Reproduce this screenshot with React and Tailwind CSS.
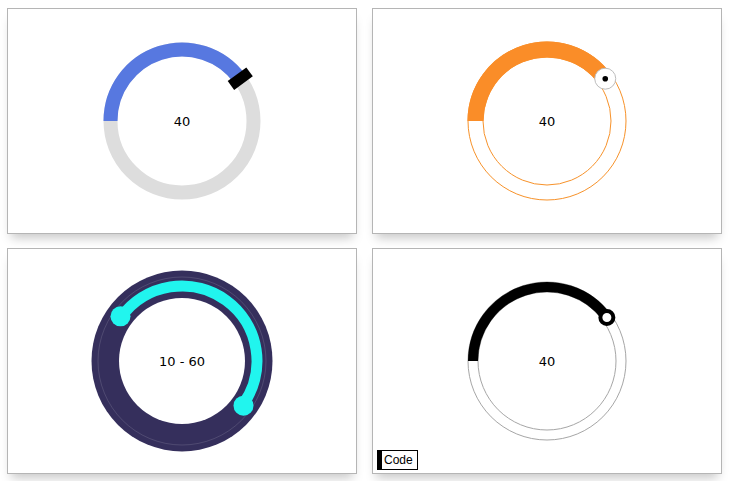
const CX = 100;
const CY = 100;

function pt(f, r) {
  const a = 2 * Math.PI * f;
  return [CX - r * Math.cos(a), CY - r * Math.sin(a)];
}

function arc(f0, f1, r) {
  const [x0, y0] = pt(f0, r);
  const [x1, y1] = pt(f1, r);
  const large = f1 - f0 > 0.5 ? 1 : 0;
  return `M ${x0} ${y0} A ${r} ${r} 0 ${large} 1 ${x1} ${y1}`;
}

function Label({ children }) {
  return (
    <div className="absolute inset-0 flex items-center justify-center pt-[2px] text-[13px] text-black font-['DejaVu_Sans',sans-serif]">
      {children}
    </div>
  );
}

function Panel({ children }) {
  return (
    <div className="relative flex h-[226px] w-[350px] items-center justify-center border border-[#b5b5b5] bg-white shadow-[0_8px_10px_-4px_rgba(0,0,0,0.22)]">
      {children}
    </div>
  );
}

function BlueGauge() {
  const [hx, hy] = pt(0.4, 72);
  return (
    <div className="relative h-[200px] w-[200px]">
      <svg width="200" height="200" viewBox="0 0 200 200">
        <circle cx={CX} cy={CY} r="71.5" fill="none" stroke="#dddddd" strokeWidth="14" />
        <path d={arc(0, 0.4, 71.5)} fill="none" stroke="#5778e0" strokeWidth="14" />
        <rect x={hx - 11.5} y={hy - 5.5} width="23" height="11" fill="#000" transform={`rotate(-36 ${hx} ${hy})`} />
      </svg>
      <Label>40</Label>
    </div>
  );
}

function OrangeGauge() {
  const [hx, hy] = pt(0.4, 72);
  return (
    <div className="relative h-[200px] w-[200px]">
      <svg width="200" height="200" viewBox="0 0 200 200">
        <circle cx={CX} cy={CY} r="79" fill="none" stroke="#f7922a" strokeWidth="1" />
        <circle cx={CX} cy={CY} r="64" fill="none" stroke="#f7922a" strokeWidth="1" />
        <path d={arc(0, 0.4, 71.5)} fill="none" stroke="#fa8d28" strokeWidth="16" />
        <circle cx={hx} cy={hy} r="10.5" fill="#fff" stroke="#bdbdbd" strokeWidth="1" />
        <circle cx={hx} cy={hy} r="2.8" fill="#000" />
      </svg>
      <Label>40</Label>
    </div>
  );
}

function RangeGauge() {
  const [ax, ay] = pt(0.1, 76);
  const [bx, by] = pt(0.6, 76);
  return (
    <div className="relative h-[200px] w-[200px]">
      <svg width="200" height="200" viewBox="0 0 200 200">
        <circle cx={CX} cy={CY} r="90.5" fill="#352f5c" />
        <circle cx={CX} cy={CY} r="84" fill="none" stroke="rgba(255,255,255,0.22)" strokeWidth="0.6" />
        <circle cx={CX} cy={CY} r="63" fill="#fff" />
        <path d={arc(0.1, 0.6, 75)} fill="none" stroke="#21f5ee" strokeWidth="11" />
        <circle cx={ax} cy={ay} r="10" fill="#21f5ee" />
        <circle cx={bx} cy={by} r="10" fill="#21f5ee" />
      </svg>
      <Label>10 - 60</Label>
    </div>
  );
}

function BlackGauge() {
  const [hx, hy] = pt(0.4, 74);
  return (
    <div className="relative h-[200px] w-[200px]">
      <svg width="200" height="200" viewBox="0 0 200 200">
        <circle cx={CX} cy={CY} r="79" fill="none" stroke="#a6a6a6" strokeWidth="1" />
        <circle cx={CX} cy={CY} r="69" fill="none" stroke="#a6a6a6" strokeWidth="1" />
        <path d={arc(0, 0.4, 74)} fill="none" stroke="#000" strokeWidth="10" />
        <circle cx={hx} cy={hy} r="6.5" fill="#fff" stroke="#000" strokeWidth="4" />
      </svg>
      <Label>40</Label>
    </div>
  );
}

export default function App() {
  return (
    <div className="min-h-screen bg-white pl-[7px] pt-[8px]">
      <div className="grid w-fit grid-cols-[350px_350px] gap-x-[15px] gap-y-[14px]">
        <Panel>
          <BlueGauge />
        </Panel>
        <Panel>
          <OrangeGauge />
        </Panel>
        <Panel>
          <RangeGauge />
        </Panel>
        <Panel>
          <BlackGauge />
          {/* Code toggle */}
          <button className="absolute bottom-[3px] left-[4px] flex h-[20px] items-center border border-l-[5px] border-black bg-white pl-[2px] pr-[4px] text-[12px] leading-none text-black font-['Liberation_Sans',sans-serif]">
            Code
          </button>
        </Panel>
      </div>
    </div>
  );
}
